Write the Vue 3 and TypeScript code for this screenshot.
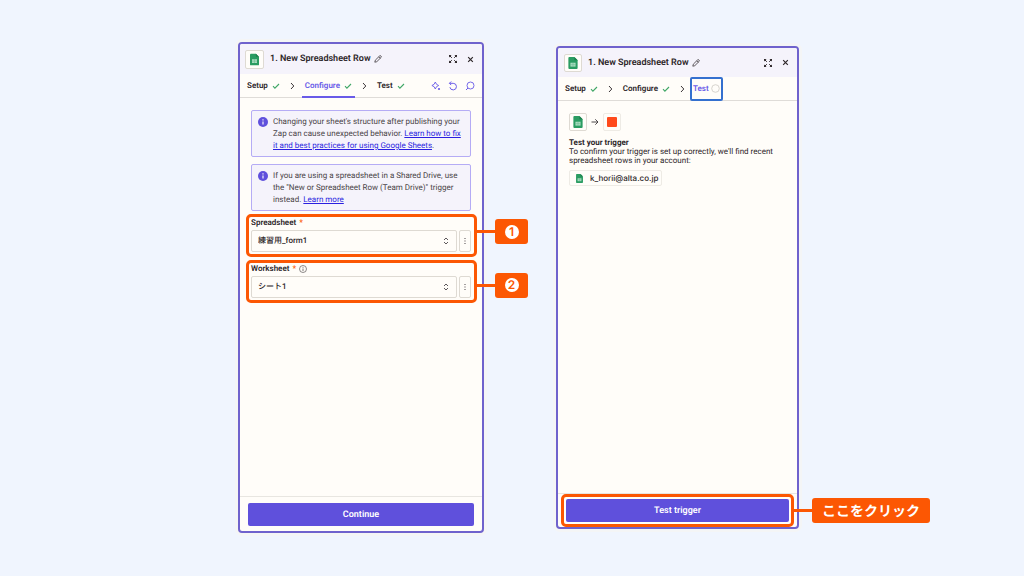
<script setup lang="ts">
import { ref } from 'vue'

interface Notice {
  text: string
  link: string
  tail: string
}

interface Field {
  id: string
  label: string
  value: string
  info: boolean
  mark: string
}

const notices: Notice[] = [
  {
    text: "Changing your sheet's structure after publishing your Zap can cause unexpected behavior. ",
    link: 'Learn how to fix it and best practices for using Google Sheets',
    tail: '.',
  },
  {
    text: 'If you are using a spreadsheet in a Shared Drive, use the "New or Spreadsheet Row (Team Drive)" trigger instead. ',
    link: 'Learn more',
    tail: '',
  },
]

const fields = ref<Field[]>([
  { id: 'spreadsheet', label: 'Spreadsheet', value: '練習用_form1', info: false, mark: '1' },
  { id: 'worksheet', label: 'Worksheet', value: 'シート1', info: true, mark: '2' },
])
</script>

<template>
  <svg class="defs" width="0" height="0" aria-hidden="true">
    <symbol id="sheet" viewBox="0 0 10 13">
      <path d="M1 0h5.5L10 3.5V12a1 1 0 0 1-1 1H1a1 1 0 0 1-1-1V1a1 1 0 0 1 1-1z" fill="#2a9c62" />
      <path d="M6.5 0 10 3.5H6.5z" fill="#1b7f4b" />
      <path d="M2.2 6.2h5.6v4.2H2.2z" fill="#a9dcc0" />
      <path d="M2.2 8.3h5.6M5 6.2v4.2" stroke="#5bb587" stroke-width=".5" />
    </symbol>
    <symbol id="pencil" viewBox="0 0 8 8">
      <path d="M.8 7.2 1.3 5.2 5.5 1a.9.9 0 0 1 1.5 1.5L2.8 6.7zM4.7 1.8l1.5 1.5" fill="none" stroke="#3b3538" stroke-width=".8" stroke-linejoin="round" />
    </symbol>
    <symbol id="expand" viewBox="0 0 10 10">
      <path d="M1 1h2.600L1 3.600zM9 1v2.600L6.400 1zM9 9H6.400L9 6.400zM1 9V6.400L3.600 9z" fill="#2d2629" />
      <path d="M1.500 1.500l2.300 2.300M8.500 1.500 6.200 3.800M8.500 8.500 6.200 6.200M1.500 8.500l2.300-2.300" fill="none" stroke="#2d2629" stroke-width="1" />
    </symbol>
    <symbol id="close" viewBox="0 0 6 6">
      <path d="m1 1 4 4M5 1 1 5" stroke="#2d2629" stroke-width="1" />
    </symbol>
    <symbol id="check" viewBox="0 0 8 6">
      <path d="m1 3.200 1.900 1.900L7 1" fill="none" stroke="#3fa766" stroke-width="1.100" />
    </symbol>
    <symbol id="chevron" viewBox="0 0 5 8">
      <path d="m1 1 2.800 3L1 7" fill="none" stroke="#3b3538" stroke-width="1" />
    </symbol>
  </svg>

  <main class="page">
    <section class="panel configure">
      <header class="head">
        <span class="app"><svg width="9" height="13"><use href="#sheet" /></svg></span>
        <h2>1. New Spreadsheet Row</h2>
        <button class="icon" aria-label="Rename"><svg width="8" height="8"><use href="#pencil" /></svg></button>
        <button class="icon push" aria-label="Expand"><svg width="10" height="10"><use href="#expand" /></svg></button>
        <button class="icon" aria-label="Close"><svg width="7" height="7"><use href="#close" /></svg></button>
      </header>
      <nav class="tabs">
        <button class="tab">Setup<svg width="8" height="6"><use href="#check" /></svg></button>
        <svg class="sep" width="5" height="8"><use href="#chevron" /></svg>
        <button class="tab current">Configure<svg width="8" height="6"><use href="#check" /></svg></button>
        <svg class="sep" width="5" height="8"><use href="#chevron" /></svg>
        <button class="tab">Test<svg width="8" height="6"><use href="#check" /></svg></button>
        <span class="tools">
          <button class="icon" aria-label="Suggest">
            <svg width="10" height="10" viewBox="0 0 10 10"><path d="M4.300 1 5.500 3.300 7.700 4.500 5.500 5.700 4.300 8 3.100 5.700.9 4.500 3.100 3.300z" fill="none" stroke="#695be8" stroke-width=".9" stroke-linejoin="round" /><circle cx="8" cy="8" r="1.100" fill="#695be8" /></svg>
          </button>
          <button class="icon" aria-label="Undo">
            <svg width="10" height="10" viewBox="0 0 10 10"><path d="M3.200.5 1.400 2.300l1.800 1.800M1.500 2.300h3.700a3.300 3.300 0 1 1-3.300 3.900" fill="none" stroke="#695be8" stroke-width="1" /></svg>
          </button>
          <button class="icon" aria-label="Search">
            <svg width="10" height="10" viewBox="0 0 10 10"><circle cx="5.500" cy="4.500" r="3.500" fill="none" stroke="#695be8" stroke-width=".9" /><path d="M3 7 1 9" stroke="#695be8" stroke-width="1" /></svg>
          </button>
        </span>
      </nav>
      <div class="body">
        <aside v-for="n in notices" :key="n.link" class="notice">
          <svg width="10" height="10" viewBox="0 0 10 10"><circle cx="5" cy="5" r="5" fill="#5f50dc" /><path d="M5 4.400v3M5 2.200v1.200" stroke="#fff" stroke-width="1.100" /></svg>
          <p>{{ n.text }}<a href="#">{{ n.link }}</a>{{ n.tail }}</p>
        </aside>
        <div class="fields">
          <div v-for="f in fields" :key="f.id" class="field outlined">
            <label :for="f.id">{{ f.label }} <em>*</em>
              <svg v-if="f.info" width="8" height="8" viewBox="0 0 8 8"><circle cx="4" cy="4" r="3.500" fill="none" stroke="#5c5659" stroke-width=".7" /><path d="M4 3.500v2.500M4 1.900v.9" stroke="#5c5659" stroke-width=".8" /></svg>
            </label>
            <div class="row">
              <span class="pick">
                <select :id="f.id" v-model="f.value"><option>{{ f.value }}</option></select>
                <svg width="6" height="8" viewBox="0 0 6 8"><path d="M1 3 3 1l2 2M1 5l2 2 2-2" fill="none" stroke="#4b4548" stroke-width=".9" /></svg>
              </span>
              <button class="more" :aria-label="f.label + ' options'"><svg width="2" height="8" viewBox="0 0 2 8"><path d="M.5 1h1v1h-1zM.5 3.500h1v1h-1zM.5 6h1v1h-1z" fill="#4b4548" /></svg></button>
            </div>
            <span class="callout"><b class="tag"><i>{{ f.mark }}</i></b></span>
          </div>
        </div>
      </div>
      <footer class="foot"><button class="primary">Continue</button></footer>
    </section>

    <section class="panel test">
      <header class="head">
        <span class="app"><svg width="10" height="12"><use href="#sheet" /></svg></span>
        <h2>1. New Spreadsheet Row</h2>
        <button class="icon" aria-label="Rename"><svg width="8" height="8"><use href="#pencil" /></svg></button>
        <button class="icon push" aria-label="Expand"><svg width="10" height="10"><use href="#expand" /></svg></button>
        <button class="icon" aria-label="Close"><svg width="7" height="7"><use href="#close" /></svg></button>
      </header>
      <nav class="tabs">
        <button class="tab">Setup<svg width="8" height="6"><use href="#check" /></svg></button>
        <svg class="sep" width="5" height="8"><use href="#chevron" /></svg>
        <button class="tab">Configure<svg width="8" height="6"><use href="#check" /></svg></button>
        <svg class="sep" width="5" height="8"><use href="#chevron" /></svg>
        <button class="tab focused">Test<svg width="9" height="9" viewBox="0 0 9 9"><circle cx="4.500" cy="4.500" r="3.800" fill="none" stroke="#d2cfc9" stroke-width=".9" /></svg></button>
      </nav>
      <div class="body">
        <div class="flow">
          <span class="app"><svg width="10" height="12"><use href="#sheet" /></svg></span>
          <svg width="8" height="8" viewBox="0 0 8 8"><path d="M.5 4h6.500M4.300 1.300 7 4 4.300 6.700" fill="none" stroke="#3b3538" stroke-width=".9" /></svg>
          <span class="app light"><span class="block"></span></span>
        </div>
        <h3>Test your trigger</h3>
        <p class="hint">To confirm your trigger is set up correctly, we'll find recent spreadsheet rows in your account:</p>
        <span class="account"><svg width="7" height="9"><use href="#sheet" /></svg>k_horii@alta.co.jp</span>
      </div>
      <footer class="foot">
        <div class="outlined action">
          <button class="primary">Test trigger</button>
          <span class="callout"><b class="tag wide">ここをクリック</b></span>
        </div>
      </footer>
    </section>
  </main>
</template>

<style>
body {
  background: #f0f5fe;
}
</style>

<style scoped>
* {
  box-sizing: border-box;
}
.defs {
  position: absolute;
}
.page {
  display: flex;
  justify-content: center;
  gap: 72px;
  min-height: 100vh;
  padding: 42px 0 43px 13px;
  background: #f0f5fe;
  color: #2d2629;
  font: 8px/12px Roboto, "Noto Sans CJK JP", sans-serif;
  text-rendering: geometricPrecision;
}
button,
select {
  margin: 0;
  padding: 0;
  border: 0;
  background: none;
  color: inherit;
  font: inherit;
  text-rendering: inherit;
}
svg {
  display: block;
  flex: none;
}
h2,
h3,
p {
  margin: 0;
}
.panel {
  display: flex;
  flex-direction: column;
  width: 246px;
  border: 2px solid #6f62cd;
  border-radius: 4px;
  background: #fffdf9;
  box-shadow: 0 0 0 3px #f4f5f6;
}
.test {
  width: 243px;
  margin: 4px 0;
}
.head {
  display: flex;
  align-items: center;
  height: 30px;
  padding: 0 8px 0 5px;
  border-radius: 2px 2px 0 0;
  background: #f5f3fb;
}
.head h2 {
  margin: 0 3px 0 6px;
  font-size: 9px;
  font-weight: 600;
}
.push {
  margin-left: auto;
  margin-right: 9px;
}
.app {
  display: flex;
  align-items: center;
  justify-content: center;
  width: 19px;
  height: 19px;
  border: 1px solid #dedad3;
  border-radius: 2px;
  background: #fffdf9;
}
.test .app {
  width: 18px;
  height: 18px;
}
.test .light {
  border-color: #eeebe5;
}
.block {
  width: 10px;
  height: 10px;
  border-radius: 1px;
  background: #ff4a1c;
}
.tabs {
  display: flex;
  align-items: center;
  height: 24px;
  padding: 0 7px;
  border-bottom: 1px solid #dfdcd8;
}
.tab {
  display: flex;
  align-items: center;
  gap: 4px;
  height: 24px;
  font-weight: 600;
}
.current {
  margin: 0 -3px;
  padding: 0 3px;
  border-bottom: 2px solid #695be8;
  border-top: 2px solid transparent;
  color: #695be8;
}
.sep {
  margin: 0 10px;
}
.tools {
  display: flex;
  gap: 7px;
  margin-left: auto;
}
.body {
  flex: 1;
  padding: 12px 11px;
}
.notice {
  display: flex;
  gap: 5px;
  margin-bottom: 7px;
  padding: 5px 5px 4px 6px;
  border: 1px solid #b5acf5;
  border-radius: 2px;
  background: #f5f3fb;
  color: #4a4447;
}
.notice svg {
  margin-top: 1px;
}
.notice a {
  color: #2a1fe0;
}
.outlined {
  position: relative;
  border: 3px solid #fc5703;
  border-radius: 5px;
}
.fields {
  display: grid;
  gap: 3px;
  margin: -4px -6px 0 -5px;
}
.field {
  height: 43px;
  padding: 0 3px 0 2px;
}
.field label {
  display: flex;
  align-items: center;
  gap: 3px;
  height: 12px;
  font-weight: 600;
}
.field em {
  color: #fc5703;
  font-style: normal;
}
.row {
  display: flex;
  gap: 2px;
  margin-top: 1px;
}
.pick {
  display: flex;
  align-items: center;
  flex: 1;
  height: 22px;
  padding-right: 7px;
  border: 1px solid #dedad3;
  border-radius: 2px;
}
.pick select {
  flex: 1;
  height: 20px;
  padding-left: 6px;
  appearance: none;
  font-weight: 500;
}
.more {
  display: flex;
  align-items: center;
  justify-content: center;
  width: 12px;
  border: 1px solid #dedad3;
  border-radius: 2px;
}
.callout {
  position: absolute;
  top: 50%;
  left: 100%;
  display: flex;
  align-items: center;
  height: 0;
  margin-left: 3px;
}
.callout::before {
  content: "";
  width: 18px;
  height: 3px;
  background: #fc5703;
}
.tag {
  display: flex;
  align-items: center;
  justify-content: center;
  width: 33px;
  height: 25px;
  border-radius: 3px;
  background: #fc5703;
  color: #fff;
}
.field:first-child .callout {
  top: 40%;
}
.field:last-child .callout {
  top: 60%;
}
.tag i {
  width: 14px;
  height: 14px;
  border-radius: 50%;
  background: #fff;
  color: #fc5703;
  font: 600 12px/14px Inter, sans-serif;
  text-align: center;
}
.wide {
  width: 118px;
  font: 700 14px/20px "Noto Sans CJK JP", sans-serif;
  white-space: nowrap;
}
.foot {
  padding: 6px 8px 5px;
  border-top: 1px solid #e8e6e1;
}
.primary {
  display: block;
  width: 100%;
  height: 23px;
  border-radius: 2px;
  background: #5f50dc;
  color: #fff;
  font-size: 9px;
  font-weight: 600;
}
.focused {
  gap: 2px;
  margin-left: -5px;
  padding: 0 1px;
  border: 2px solid #3470cf;
  border-radius: 2px;
  color: #695be8;
}
.test .head {
  height: 29px;
  padding-left: 6px;
}
.flow {
  display: flex;
  align-items: center;
  gap: 4px;
}
.hint {
  line-height: 9px;
}
h3 {
  margin-top: 7px;
  font-size: 8px;
  line-height: 9px;
}
.account {
  display: inline-flex;
  align-items: center;
  gap: 7px;
  height: 16px;
  margin-top: 5px;
  padding: 0 3px 0 6px;
  border: 1px solid #eeebe5;
  border-radius: 2px;
  font-family: Inter, sans-serif;
  font-weight: 500;
}
.test .foot {
  padding: 0 3px;
}
.action {
  padding: 2px;
}
</style>
